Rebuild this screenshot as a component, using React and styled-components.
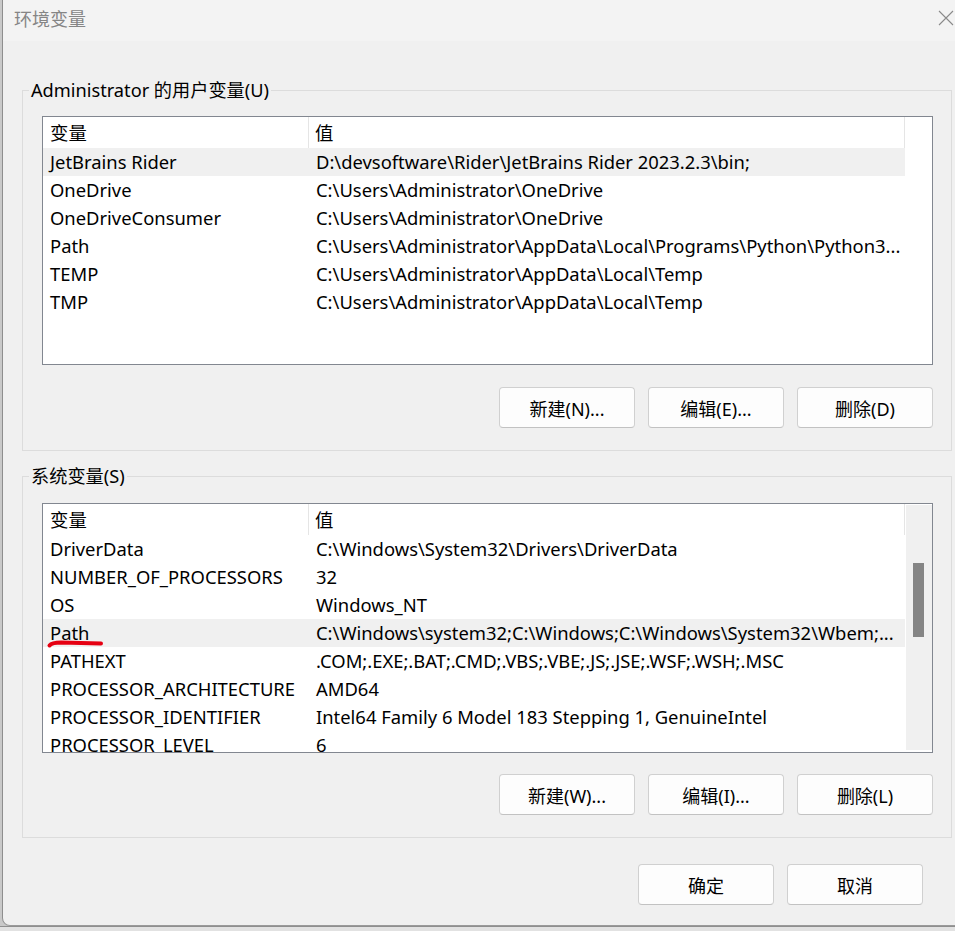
import React from "react";
import styled, { createGlobalStyle } from "styled-components";

const FONT = `"Noto Sans", "Noto Sans CJK SC", sans-serif`;
const FS = "18.4px";

const Global = createGlobalStyle`
  html, body { margin: 0; padding: 0; }
  body { background: #c4c4c4; font-family: ${FONT}; }
  * { box-sizing: border-box; }
`;

const Desktop = styled.div`
  width: 955px;
  height: 931px;
  overflow: hidden;
  background: linear-gradient(#8f8f8f 0 1px, #e2e2e2 1px);
  background-position: 0 926px;
  background-repeat: no-repeat;
  background-color: #c9c9c9;
`;

const Window = styled.div`
  margin-left: 2px;
  width: 960px;
  height: 926px;
  background: #f0f0f0;
  border-left: 1px solid #8e8e8e;
  border-bottom: 1px solid #9a9a9a;
  border-bottom-left-radius: 8px;
  display: flex;
  flex-direction: column;
  overflow: hidden;
`;

const TitleBar = styled.div`
  height: 41px;
  flex: none;
  background: #f3f3f3;
  display: flex;
  align-items: center;
  justify-content: space-between;
  padding-left: 11px;
  padding-right: 8px;
`;

const Title = styled.span`
  font-size: 18px;
  color: #858585;
  margin-top: -5px;
`;

const CloseGlyph = styled.svg`
  width: 16px;
  height: 16px;
  margin-top: -6px;
`;

const Body = styled.div`
  flex: 1;
  display: flex;
  flex-direction: column;
  padding: 0 0 0 19px;
  width: 949px;
`;

const Group = styled.section`
  position: relative;
  border: 1px solid #dcdcdc;
  margin-top: ${(p) => p.$top}px;
  padding: ${(p) => p.$pt}px 18px 22px 19px;
  display: flex;
  flex-direction: column;
`;

const GroupLabel = styled.span`
  position: absolute;
  top: -14px;
  left: 6px;
  padding: 0 2px;
  background: #f0f0f0;
  font-size: 18.2px;
  line-height: 26px;
  color: #000;
`;

const ListBox = styled.div`
  position: relative;
  height: ${(p) => p.$h}px;
  border: 1px solid #828790;
  background: #fff;
  display: flex;
  overflow: hidden;
`;

const ListContent = styled.div`
  width: 862px;
  flex: none;
  display: flex;
  flex-direction: column;
`;

const HeaderRow = styled.div`
  display: grid;
  grid-template-columns: 266px 1fr;
  height: 31px;
  flex: none;
  border-right: 1px solid #e5e5e5;
`;

const HeaderCell = styled.div`
  font-size: ${FS};
  line-height: 31px;
  padding-left: ${(p) => (p.$first ? 7 : 6)}px;
  border-right: ${(p) => (p.$first ? "1px solid #e5e5e5" : "none")};
  color: #000;
`;

const Row = styled.div`
  display: grid;
  grid-template-columns: 267px 1fr;
  height: 28px;
  flex: none;
  background: ${(p) => (p.$hl ? "#f0f0f0" : "transparent")};
`;

const Cell = styled.div`
  font-size: ${FS};
  line-height: 28px;
  padding-left: ${(p) => (p.$first ? 7 : 6)}px;
  white-space: nowrap;
  overflow: hidden;
  color: #000;
`;

const ScrollTrack = styled.div`
  flex: 1;
  margin: 1px 0 2px 1px;
  background: ${(p) => (p.$on ? "#f0f0f0" : "#fff")};
  position: relative;
`;

const Thumb = styled.div`
  position: absolute;
  left: 7px;
  top: 58px;
  width: 11px;
  height: 74px;
  background: #858585;
`;

const ButtonRow = styled.div`
  display: flex;
  justify-content: flex-end;
  gap: 13px;
  margin-top: ${(p) => p.$mt}px;
`;

const Button = styled.button`
  width: 136px;
  height: 41px;
  border: 1px solid #d0d0d0;
  border-bottom-color: #c2c2c2;
  border-radius: 4px;
  background: #fdfdfd;
  font-family: ${FONT};
  font-size: 18px;
  color: #000;
  padding: 0;
  cursor: default;
`;

const Footer = styled.div`
  display: flex;
  justify-content: flex-end;
  gap: 13px;
  margin-top: 26px;
  padding-right: 29px;
`;

const Underline = styled.svg`
  position: absolute;
  left: 0;
  top: 0;
  pointer-events: none;
`;

const userVars = [
  ["JetBrains Rider", "D:\\devsoftware\\Rider\\JetBrains Rider 2023.2.3\\bin;", true],
  ["OneDrive", "C:\\Users\\Administrator\\OneDrive"],
  ["OneDriveConsumer", "C:\\Users\\Administrator\\OneDrive"],
  ["Path", "C:\\Users\\Administrator\\AppData\\Local\\Programs\\Python\\Python3..."],
  ["TEMP", "C:\\Users\\Administrator\\AppData\\Local\\Temp"],
  ["TMP", "C:\\Users\\Administrator\\AppData\\Local\\Temp"],
];

const sysVars = [
  ["DriverData", "C:\\Windows\\System32\\Drivers\\DriverData"],
  ["NUMBER_OF_PROCESSORS", "32"],
  ["OS", "Windows_NT"],
  ["Path", "C:\\Windows\\system32;C:\\Windows;C:\\Windows\\System32\\Wbem;...", true],
  ["PATHEXT", ".COM;.EXE;.BAT;.CMD;.VBS;.VBE;.JS;.JSE;.WSF;.WSH;.MSC"],
  ["PROCESSOR_ARCHITECTURE", "AMD64"],
  ["PROCESSOR_IDENTIFIER", "Intel64 Family 6 Model 183 Stepping 1, GenuineIntel"],
  ["PROCESSOR_LEVEL", "6"],
];

function VarList({ rows, h, scroll, children }) {
  return (
    <ListBox $h={h}>
      <ListContent>
        <HeaderRow>
          <HeaderCell $first>变量</HeaderCell>
          <HeaderCell>值</HeaderCell>
        </HeaderRow>
        {rows.map(([k, v, hl]) => (
          <Row key={k} $hl={hl}>
            <Cell $first>{k}</Cell>
            <Cell>{v}</Cell>
          </Row>
        ))}
      </ListContent>
      <ScrollTrack $on={scroll}>{scroll && <Thumb />}</ScrollTrack>
      {children}
    </ListBox>
  );
}

export default function App() {
  return (
    <>
      <Global />
      <Desktop>
        <Window>
          <TitleBar>
            <Title>环境变量</Title>
            <CloseGlyph viewBox="0 0 16 16">
              <path d="M1 1 L15 15 M15 1 L1 15" stroke="#8a8a8a" strokeWidth="1.1" fill="none" />
            </CloseGlyph>
          </TitleBar>
          <Body>
            <Group $top={49} $pt={25}>
              <GroupLabel>Administrator 的用户变量(U)</GroupLabel>
              <VarList rows={userVars} h={249} />
              <ButtonRow $mt={22}>
                <Button>新建(N)...</Button>
                <Button>编辑(E)...</Button>
                <Button>删除(D)</Button>
              </ButtonRow>
            </Group>
            <Group $top={25} $pt={26}>
              <GroupLabel>系统变量(S)</GroupLabel>
              <VarList rows={sysVars} h={250} scroll>
                <Underline width="120" height="160" viewBox="0 0 120 160">
                  <path
                    d="M6.5 141.5 Q9 138.5 18 138.5 L58 139.5"
                    stroke="#e60012"
                    strokeWidth="4"
                    strokeLinecap="round"
                    strokeLinejoin="round"
                    fill="none"
                  />
                </Underline>
              </VarList>
              <ButtonRow $mt={21}>
                <Button>新建(W)...</Button>
                <Button>编辑(I)...</Button>
                <Button>删除(L)</Button>
              </ButtonRow>
            </Group>
            <Footer>
              <Button>确定</Button>
              <Button>取消</Button>
            </Footer>
          </Body>
        </Window>
      </Desktop>
    </>
  );
}
